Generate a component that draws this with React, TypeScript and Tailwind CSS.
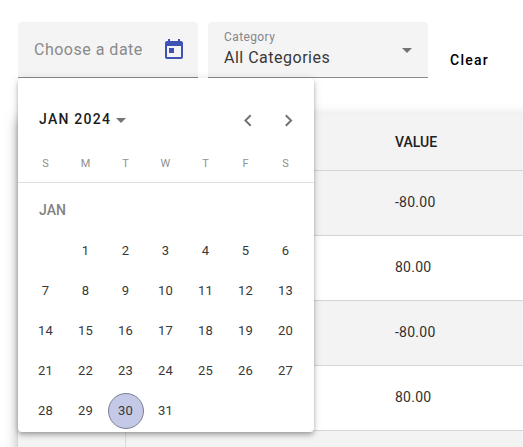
const weekdays = ['S', 'M', 'T', 'W', 'T', 'F', 'S'];
const days = Array.from({ length: 31 }, (_, i) => i + 1);
const values = ['-80.00', '80.00', '-80.00', '80.00', ''];

function DateField() {
  return (
    <div className="flex h-14 w-[180px] items-center justify-between rounded-t border-b border-[#8c8c8c] bg-[#f4f4f4] pr-3 pl-4">
      <span className="text-[16px] tracking-[0.5px] text-[#8a8a8a]">Choose a date</span>
      <svg viewBox="0 0 24 24" className="mt-px size-6 fill-[#3f51b5]">
        <path d="M19 3h-1V1h-2v2H8V1H6v2H5c-1.11 0-1.99.9-1.99 2L3 19c0 1.1.89 2 2 2h14c1.1 0 2-.9 2-2V5c0-1.1-.9-2-2-2zm0 16H5V8h14v11zM7 10h5v5H7z" />
      </svg>
    </div>
  );
}

function CategoryField() {
  return (
    <div className="flex h-14 w-[220px] items-center justify-between rounded-t border-b border-[#8c8c8c] bg-[#f4f4f4] pr-4 pl-4">
      <div className="flex flex-col pb-[2px]">
        <span className="text-[12px] leading-[18px] tracking-[0.4px] text-[#858585]">Category</span>
        <span className="text-[16px] leading-6 tracking-[0.5px] text-[#383838]">All Categories</span>
      </div>
      <svg viewBox="0 0 10 5" className="mt-[2px] h-[5px] w-[10px] fill-[#737373]">
        <path d="M0 0h10L5 5z" />
      </svg>
    </div>
  );
}

function Calendar() {
  return (
    <div className="absolute top-[78px] left-[18px] h-[354px] w-[296px] rounded bg-white shadow-[0_2px_4px_-1px_rgba(0,0,0,0.2),0_4px_5px_0_rgba(0,0,0,0.14),0_1px_10px_0_rgba(0,0,0,0.12)]">
      <div className="flex h-[84px] items-center pl-[21px]">
        <span className="mb-[2px] text-[14px] font-medium tracking-[1.25px] text-[#1c1c1c]">JAN 2024</span>
        <svg viewBox="0 0 10 5" className="mt-px ml-[5px] h-[5px] w-[10px] fill-[#757575]">
          <path d="M0 0h10L5 5z" />
        </svg>
        <svg viewBox="0 0 24 24" className="mt-[2px] ml-auto size-6 fill-[#737373]">
          <path d="M15.41 7.41 14 6l-6 6 6 6 1.41-1.41L10.83 12z" transform="translate(0 -.5)" />
        </svg>
        <svg viewBox="0 0 24 24" className="mt-[2px] mr-[14px] ml-4 size-6 fill-[#737373]">
          <path d="M8.59 16.59 10 18l6-6-6-6-1.41 1.41L13.17 12z" transform="translate(.5 -.5)" />
        </svg>
      </div>
      <div className="grid h-[21px] grid-cols-[repeat(7,40px)] border-b border-[#e0e0e0] pl-[7.5px] text-center text-[11px] leading-[3px] text-[#909090]">
        {weekdays.map((day, i) => (
          <span key={i}>{day}</span>
        ))}
      </div>
      <div className="flex h-12 items-center pt-[7px] pl-[21px] text-[14px] font-medium text-[#828282]">JAN</div>
      <div className="grid grid-cols-[repeat(7,40px)] pl-[7.5px] text-[13px] tracking-[0.2px] text-[#383838]">
        {days.map((day) => (
          <div key={day} className={'flex h-10 items-center justify-center ' + (day === 1 ? 'col-start-2' : '')}>
            <span className={'flex size-9 items-center justify-center rounded-full ' + (day === 30 ? 'border border-[#7c7f95] bg-[#c5c9e8]' : '')}>
              {day}
            </span>
          </div>
        ))}
      </div>
    </div>
  );
}

export default function App() {
  return (
    <div className="relative h-[447px] w-[523px] overflow-hidden bg-white font-[Roboto,sans-serif]">
      <div className="flex h-[114px] gap-[10px] pt-[22px] pl-[18px]">
        <DateField />
        <CategoryField />
        <button className="mt-5 ml-3 h-9 text-[14px] font-medium tracking-[1.25px] text-black">Clear</button>
      </div>
      <div className="ml-[18px] w-[560px] bg-white shadow-[0_5px_5px_-3px_rgba(0,0,0,0.2),0_8px_10px_1px_rgba(0,0,0,0.14),0_3px_14px_2px_rgba(0,0,0,0.12)]">
        <div className="flex h-[57px] border-b border-[#d5d5d5] bg-[#f3f3f3]">
          <div className="w-[108px] border-r border-[#dcdcdc]" />
          <div className="flex items-center pl-[269px] text-[14px] font-medium text-[#202020]">VALUE</div>
        </div>
        {values.map((value, i) => (
          <div key={i} className="flex h-[65px] border-b border-[#d5d5d5] odd:bg-white even:bg-[#f3f3f3]">
            <div className="w-[108px] border-r border-[#dcdcdc]" />
            <div className="flex items-center pb-[2px] pl-[269px] text-[14px] tracking-[0.25px] text-[#303030]">{value}</div>
          </div>
        ))}
      </div>
      <Calendar />
    </div>
  );
}
